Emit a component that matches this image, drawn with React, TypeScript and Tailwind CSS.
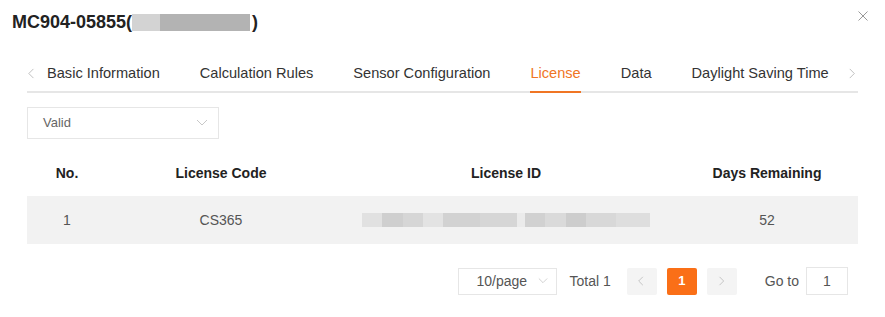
import React from "react";

const tabs = [
  "Basic Information",
  "Calculation Rules",
  "Sensor Configuration",
  "License",
  "Data",
  "Daylight Saving Time",
];

const idBlocks: [number, string][] = [
  [20, "#e1e1e1"],
  [21, "#cfcfcf"],
  [20, "#d6d6d6"],
  [20, "#e3e3e3"],
  [37, "#d2d2d2"],
  [37, "#d6d6d6"],
  [8, "#ebebeb"],
  [20, "#d1d1d1"],
  [21, "#dadada"],
  [20, "#cdcdcd"],
  [30, "#d8d8d8"],
  [34, "#dedede"],
];

function Chevron({ dir, className }: { dir: "left" | "right" | "down"; className?: string }) {
  const d =
    dir === "left" ? "M7 1 L2 6 L7 11" : dir === "right" ? "M3 1 L8 6 L3 11" : "M1 3 L6 8 L11 3";
  return (
    <svg viewBox="0 0 12 12" className={className} fill="none" stroke="currentColor" strokeWidth="1">
      <path d={d} />
    </svg>
  );
}

export default function App() {
  return (
    <div
      className="w-[885px] h-[317px] bg-white relative overflow-hidden text-[#333]"
      style={{ fontFamily: '"Liberation Sans", Arial, sans-serif' }}
    >
      {/* header */}
      <div className="flex items-center pl-[12px] pt-[10px] h-[34px]">
        <span className="text-[18px] leading-[24px] font-bold text-[#222]">MC904-05855(</span>
        <span className="flex h-[17px] mt-[1px]">
          <span className="w-[28px] bg-[#d3d3d3]" />
          <span className="w-[90px] bg-[#b3b3b3]" />
        </span>
        <span className="text-[18px] leading-[24px] font-bold text-[#222] ml-[2px]">)</span>
      </div>
      <svg
        viewBox="0 0 10 10"
        className="absolute left-[858px] top-[11px] w-[10px] h-[10px] text-[#999]"
        stroke="currentColor"
        strokeWidth="1"
      >
        <path d="M0.5 0.5 L9.5 9.5 M9.5 0.5 L0.5 9.5" />
      </svg>

      <div className="px-[27px] mt-[22px]">
        {/* tabs */}
        <div className="flex items-stretch h-[37px] border-b-2 border-[#e6e6e6]">
          <div className="w-[20px] flex items-center justify-start">
            <Chevron dir="left" className="w-[11px] h-[11px] text-[#bbb] ml-[0px]" />
          </div>
          <div className="flex gap-[40px] flex-1">
            {tabs.map((t) => (
              <div
                key={t}
                className={
                  "relative flex items-center text-[14.6px] whitespace-nowrap " +
                  (t === "License" ? "text-[#f07524]" : "text-[#333]")
                }
              >
                {t}
                {t === "License" && (
                  <span className="absolute left-0 right-0 -bottom-[2px] h-[2px] bg-[#f07524]" />
                )}
              </div>
            ))}
          </div>
          <div className="w-[14px] flex items-center justify-end">
            <Chevron dir="right" className="w-[11px] h-[11px] text-[#bbb]" />
          </div>
        </div>

        {/* select */}
        <div className="mt-[14px] w-[192px] h-[32px] border border-[#e6e6e6] flex items-center justify-between pl-[15px] pr-[10px]">
          <span className="text-[13px] text-[#666]">Valid</span>
          <Chevron dir="down" className="w-[12px] h-[12px] text-[#c8c8c8]" />
        </div>

        {/* table */}
        <div className="mt-[12px]">
          <div className="grid grid-cols-[80px_228px_342px_180px] h-[45px] items-center text-[14px] font-bold text-[#222] text-center">
            <div>No.</div>
            <div>License Code</div>
            <div>License ID</div>
            <div>Days Remaining</div>
          </div>
          <div className="grid grid-cols-[80px_228px_342px_180px] h-[48px] items-center text-[14px] text-[#555] text-center bg-[#f2f2f2]">
            <div>1</div>
            <div>CS365</div>
            <div className="flex justify-start pl-[27px]">
              <div className="flex h-[14px]">
                {idBlocks.map(([w, c], i) => (
                  <span key={i} style={{ width: w, background: c }} />
                ))}
              </div>
            </div>
            <div>52</div>
          </div>
        </div>

        {/* pagination */}
        <div className="mt-[23px] flex items-center justify-end pr-[10px] text-[14px] text-[#555]">
          <div className="w-[99px] h-[27px] border border-[#e6e6e6] flex items-center justify-between pl-[18px] pr-[8px]">
            <span>10/page</span>
            <Chevron dir="down" className="w-[10px] h-[10px] text-[#c8c8c8]" />
          </div>
          <span className="ml-[13px]">Total 1</span>
          <div className="ml-[16px] w-[30px] h-[27px] rounded-[2px] bg-[#f4f4f4] flex items-center justify-center">
            <Chevron dir="left" className="w-[10px] h-[10px] text-[#bbb]" />
          </div>
          <div className="ml-[10px] w-[30px] h-[27px] rounded-[2px] bg-[#fa6f17] flex items-center justify-center text-white font-bold text-[13px]">
            1
          </div>
          <div className="ml-[10px] w-[30px] h-[27px] rounded-[2px] bg-[#f4f4f4] flex items-center justify-center">
            <Chevron dir="right" className="w-[10px] h-[10px] text-[#bbb]" />
          </div>
          <span className="ml-[28px]">Go to</span>
          <div className="ml-[7px] w-[42px] h-[28px] border border-[#e6e6e6] flex items-center justify-center">
            1
          </div>
        </div>
      </div>
    </div>
  );
}
